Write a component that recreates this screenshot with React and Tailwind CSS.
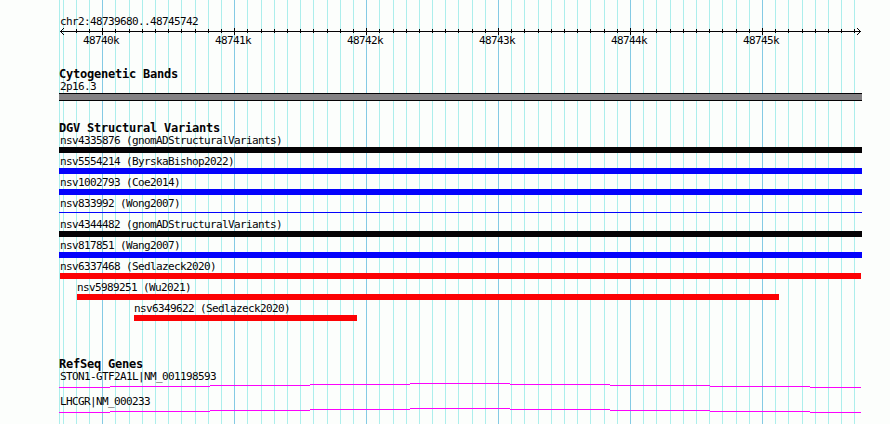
import React from 'react'

const PANEL_LEFT = 59

// x of every 100 bp line, the first one is the panel edge
const LINES = [
  59, 63, 76, 89, 102, 115, 129, 142, 155, 168, 181, 195, 208, 221, 234, 247, 261, 274, 287, 300, 313,
  327, 340, 353, 366, 379, 393, 406, 419, 432, 445, 458, 472, 485, 498, 511, 524, 538, 551, 564, 577,
  590, 604, 617, 630, 643, 656, 670, 683, 696, 709, 722, 736, 749, 762, 775, 788, 802, 815, 828, 841, 854,
]
const MAJOR = [102, 234, 366, 498, 630, 762]
const LABELS = ['48740k', '48741k', '48742k', '48743k', '48744k', '48745k']

const VARIANTS = [
  { name: 'nsv4335876 (gnomADStructuralVariants)', start: 59, end: 862, color: 'bg-[#040204]' },
  { name: 'nsv5554214 (ByrskaBishop2022)', start: 59, end: 862, color: 'bg-[#0402fc]' },
  { name: 'nsv1002793 (Coe2014)', start: 59, end: 862, color: 'bg-[#0402fc]' },
  { name: 'nsv833992 (Wong2007)', start: 59, end: 862, color: 'bg-[#0402fc]', thin: true },
  { name: 'nsv4344482 (gnomADStructuralVariants)', start: 59, end: 862, color: 'bg-[#040204]' },
  { name: 'nsv817851 (Wang2007)', start: 59, end: 862, color: 'bg-[#0402fc]' },
  { name: 'nsv6337468 (Sedlazeck2020)', start: 60, end: 861, color: 'bg-[#fc0204]' },
  { name: 'nsv5989251 (Wu2021)', start: 77, end: 779, color: 'bg-[#fc0204]' },
  { name: 'nsv6349622 (Sedlazeck2020)', start: 134, end: 357, color: 'bg-[#fc0204]' },
]

const GENES = ['STON1-GTF2A1L|NM_001198593', 'LHCGR|NM_000233']

function GridLines() {
  return (
    <div className="col-start-1 row-start-1 flex h-full">
      {LINES.map((x, i) => (
        <div
          key={x}
          className={`shrink-0 border-l ${MAJOR.includes(x) ? 'border-[#84cae4]' : 'border-[#aceeec]'}`}
          style={{ width: (LINES[i + 1] ?? 862) - x }}
        />
      ))}
    </div>
  )
}

function Ruler() {
  return (
    <svg className="block h-[7px] w-[803px]" viewBox="59 28 803 7" shapeRendering="crispEdges" fill="#040204">
      <rect x="60" y="31" width="801" height="1" />
      {LINES.slice(2).map(x => (
        <rect key={x} x={x} y={MAJOR.includes(x) ? 28 : 29} width="1" height={MAJOR.includes(x) ? 7 : 4} />
      ))}
      <path d="M61 30h1v1h-1zM62 29h1v1h-1zM63 28h1v1h-1zM61 32h1v1h-1zM62 33h1v1h-1zM63 34h1v1h-1z" />
      <path d="M859 30h1v1h-1zM858 29h1v1h-1zM857 28h1v1h-1zM859 32h1v1h-1zM858 33h1v1h-1zM857 34h1v1h-1z" />
    </svg>
  )
}

function Label({ children, flush }) {
  return (
    <div className={`h-[13px] text-[11px] leading-[13px] tracking-[-0.622px] ${flush ? '' : 'pl-px'}`}>
      {children}
    </div>
  )
}

function Heading({ children }) {
  return <h2 className="h-[13px] text-[12px] font-bold leading-[13px] tracking-[-0.224px]">{children}</h2>
}

function Variant({ name, start, end, color, thin }) {
  return (
    <div className="h-[21px]" style={{ marginLeft: start - PANEL_LEFT }}>
      <Label flush={start > PANEL_LEFT}>{name}</Label>
      <div className={`${thin ? 'mt-[2px] h-px' : 'h-[6px]'} ${color}`} style={{ width: end - start }} />
    </div>
  )
}

// intron drawn as 100px steps, highest in the middle
function Gene({ name }) {
  const steps = [[59, 4], [110, 3], [210, 2], [310, 1], [410, 0], [510, 1], [610, 2], [710, 3], [810, 4]]
  return (
    <div className="h-[25px]">
      <Label>{name}</Label>
      <svg className="block h-[5px] w-[803px]" viewBox="59 0 803 5" shapeRendering="crispEdges" fill="#fc02fc">
        {steps.map(([x, y], i) => (
          <rect key={x} x={x} y={y} width={(steps[i + 1]?.[0] ?? 861) - x} height="1" />
        ))}
      </svg>
    </div>
  )
}

export default function App() {
  return (
    <div className="h-[424px] w-[890px] overflow-hidden bg-[#fcfefc] pl-[59px] font-['DejaVu_Sans_Mono',monospace] text-[#040204]">
      <div className="grid h-full w-[803px] grid-cols-1 grid-rows-1 whitespace-pre">
        <GridLines />
        <main className="z-10 col-start-1 row-start-1 pt-[15px]">
          <Label>chr2:48739680..48745742</Label>
          <Ruler />
          <div className="-mt-px flex pl-[24px]">
            {LABELS.map(l => (
              <div key={l} className="w-[132px] shrink-0"><Label flush>{l}</Label></div>
            ))}
          </div>

          <section className="mt-[21px]">
            <Heading>Cytogenetic Bands</Heading>
            <div className="-mt-px"><Label>2p16.3</Label></div>
            <div className="h-[8px] border-y border-[#040204] bg-[#848284]" />
          </section>

          <section className="mt-[21px]">
            <Heading>DGV Structural Variants</Heading>
            <div className="-mt-px">
              {VARIANTS.map(v => <Variant key={v.name} {...v} />)}
            </div>
          </section>

          <section className="mt-[35px]">
            <Heading>RefSeq Genes</Heading>
            <div className="-mt-px">
              {GENES.map(g => <Gene key={g} name={g} />)}
            </div>
          </section>
        </main>
      </div>
    </div>
  )
}
